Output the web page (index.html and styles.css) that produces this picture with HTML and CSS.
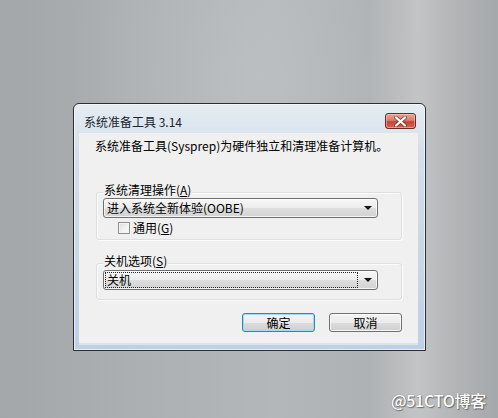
FILE: index.html
```html
<!DOCTYPE html>
<html lang="zh-CN">
<head>
<meta charset="utf-8">
<title>系统准备工具 3.14</title>
<link rel="stylesheet" href="styles.css">
</head>
<body>
<div class="desktop">
  <div class="window">
    <div class="titlebar">
      <span class="title">系统准备工具 3.14</span>
      <span class="close">
        <svg width="13" height="11" viewBox="0 0 13 11">
          <path d="M2 1.5 L11 9.5 M11 1.5 L2 9.5" stroke="#5a2020" stroke-width="4" stroke-linecap="round" fill="none" opacity="0.55"/>
          <path d="M2 1.5 L11 9.5 M11 1.5 L2 9.5" stroke="#ffffff" stroke-width="2.2" stroke-linecap="round" fill="none"/>
        </svg>
      </span>
    </div>
    <div class="client">
      <p class="desc">系统准备工具(Sysprep)为硬件独立和清理准备计算机。</p>
      <div class="group g1">
        <span class="glabel">系统清理操作(<u>A</u>)</span>
        <div class="gbox">
          <div class="combo">
            <span class="ctext">进入系统全新体验(OOBE)</span>
            <span class="arrow"></span>
          </div>
          <div class="check"><span class="cbox"></span><span>通用(<u>G</u>)</span></div>
        </div>
      </div>
      <div class="group g2">
        <span class="glabel">关机选项(<u>S</u>)</span>
        <div class="gbox">
          <div class="combo">
            <span class="cfocus">关机</span>
            <span class="arrow"></span>
          </div>
        </div>
      </div>
      <div class="buttons">
        <span class="btn default">确定</span>
        <span class="btn">取消</span>
      </div>
    </div>
  </div>
  <div class="watermark">@51CTO博客</div>
</div>
</body>
</html>
```
FILE: styles.css
```css
html, body {
  margin: 0;
  padding: 0;
}
body {
  width: 498px;
  height: 418px;
  overflow: hidden;
  font-family: "Noto Sans CJK SC", sans-serif;
}
.desktop {
  position: relative;
  width: 498px;
  height: 418px;
  background:
    radial-gradient(ellipse 180px 260px at 250px 80px, rgba(196,199,201,0.5), rgba(196,199,201,0)),
    linear-gradient(90deg, #a3a7a9 0%, #adb0b2 30%, #b4b7b9 55%, #aeb1b3 74%, #c2c4c5 84%, #b5b7b9 90%, #a5a8aa 100%);
}
.window {
  position: absolute;
  left: 73px;
  top: 103px;
  width: 353px;
  height: 248px;
  box-sizing: border-box;
  border: 1px solid #2b2f33;
  border-radius: 6px 6px 0 0;
  background: linear-gradient(180deg, #e6edf3 0%, #d3dfe9 20%, #c9d7e5 60%, #bfd0e6 100%);
  box-shadow: inset 0 0 0 1px rgba(255,255,255,0.6);
  display: flex;
  flex-direction: column;
}
.titlebar {
  height: 29px;
  display: flex;
  align-items: flex-start;
}
.title {
  margin: 11px 0 0 10px;
  font-size: 12px;
  line-height: 14px;
  color: #1a2430;
}
.close {
  margin: 9px 9px 0 auto;
  width: 31px;
  height: 16px;
  box-sizing: border-box;
  border: 1px solid #6b2a26;
  border-radius: 3px;
  background: linear-gradient(180deg, #e8a597 0%, #dd7c6a 45%, #c7433a 55%, #cf6a50 100%);
  box-shadow: inset 0 0 0 1px rgba(255,220,210,0.45);
  display: flex;
  align-items: center;
  justify-content: center;
}
.client {
  margin: 0 7px 0 5px;
  height: 210px;
  box-sizing: border-box;
  background: #f0f0f0;
  padding: 6px 16px 0 16px;
  font-size: 12px;
  line-height: 14px;
  color: #000;
  display: flex;
  flex-direction: column;
  box-shadow: 0 1px 0 #f4d8e6, 0 2px 0 #cfe9ef;
}
.desc {
  margin: 0;
}
u {
  text-decoration: underline;
  text-underline-offset: 1px;
}
.group {
  margin: 30px 0 0 1px;
  display: flex;
  flex-direction: column;
}
.g2 {
  margin-top: 14px;
}
.glabel {
  align-self: flex-start;
  margin-left: 7px;
  padding: 0 1px;
  background: #f0f0f0;
  position: relative;
  z-index: 1;
}
.gbox {
  margin-top: -5px;
  border: 1px solid #dddfe1;
  border-radius: 3px;
  box-shadow: inset 1px 1px 0 #fbfbfb, 1px 1px 0 #fbfbfb;
  padding: 5px 23px 4px 6px;
}
.g2 .gbox {
  padding: 6px 23px 9px 6px;
}
.combo {
  height: 20px;
  box-sizing: border-box;
  border: 1px solid #707070;
  border-radius: 3px;
  background: linear-gradient(180deg, #f7f7f7 0%, #ececec 50%, #dedede 52%, #d2d2d2 100%);
  box-shadow: inset 0 0 0 1px rgba(255,255,255,0.7);
  display: flex;
  align-items: center;
}
.ctext {
  flex: 1;
  padding-left: 3px;
}
.cfocus {
  flex: 1;
  margin-left: 1px;
  height: 16px;
  box-sizing: border-box;
  border: 1px dotted #222;
  padding-left: 1px;
  line-height: 14px;
}
.arrow {
  width: 19px;
  height: 18px;
  display: flex;
  align-items: center;
  justify-content: center;
}
.arrow::before {
  content: "";
  border-left: 4px solid transparent;
  border-right: 4px solid transparent;
  border-top: 4px solid #111;
}
.check {
  margin: 3px 0 0 15px;
  display: flex;
  align-items: center;
  gap: 3px;
  height: 14px;
}
.cbox {
  width: 12px;
  height: 12px;
  box-sizing: border-box;
  border: 1px solid #8e8f8f;
  background: linear-gradient(135deg, #dcdcdc 0%, #f2f2f2 60%, #fafafa 100%);
  box-shadow: inset 0 0 0 1px #f4f4f4;
}
.buttons {
  margin-top: 13px;
  display: flex;
  justify-content: flex-end;
  gap: 14px;
}
.btn {
  width: 73px;
  height: 19px;
  box-sizing: border-box;
  border: 1px solid #707070;
  border-radius: 3px;
  background: linear-gradient(180deg, #f4f4f4 0%, #ebebeb 50%, #dddddd 52%, #cfcfcf 100%);
  box-shadow: inset 0 0 0 1px rgba(255,255,255,0.8);
  display: flex;
  align-items: center;
  justify-content: center;
  line-height: 14px;
}
.btn.default {
  border-color: #3c7fb1;
  box-shadow: inset 0 0 0 1px #9fdcf5;
}
.watermark {
  position: absolute;
  left: 391px;
  top: 390px;
  font-size: 16px;
  line-height: 20px;
  font-weight: 500;
  color: #ffffff;
  text-shadow: 1px 1px 1px rgba(60,60,60,0.6), 0 0 1px rgba(80,80,80,0.6);
  letter-spacing: -0.3px;
}
```
